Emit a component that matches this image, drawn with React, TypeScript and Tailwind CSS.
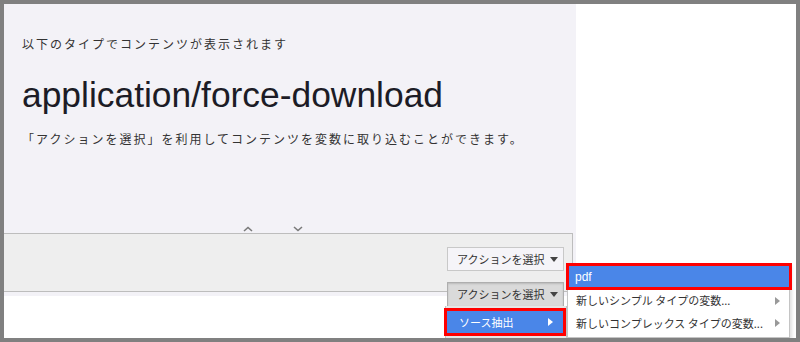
const jp = "font-['Noto_Sans_CJK_JP','Noto_Sans',sans-serif]";

const Caret = ({ color = "border-t-[#444]" }: { color?: string }) => (
  <span className={`inline-block w-0 h-0 border-x-[4px] border-x-transparent border-t-[5px] ${color}`} />
);

const RightArrow = ({ color = "border-l-[#999]" }: { color?: string }) => (
  <span className={`inline-block w-0 h-0 border-y-[4px] border-y-transparent border-l-[5px] ${color}`} />
);

const Chevron = ({ up }: { up?: boolean }) => (
  <svg width="10" height="6" viewBox="0 0 10 6" className="block">
    <polyline
      points={up ? "1,5 5,1.5 9,5" : "1,1 5,4.5 9,1"}
      fill="none"
      stroke="#7a7a7a"
      strokeWidth="1.6"
    />
  </svg>
);

const App = () => {
  return (
    <div className={`relative w-[800px] h-[342px] border-4 border-[#808080] bg-white overflow-hidden ${jp}`}>
      <div className="w-[572px] h-[292px] bg-[#f3f2f7] flex flex-col">
        <div className="h-[229px] shrink-0 pl-[18px] pt-[31px] flex flex-col">
          <p className="text-[12px] leading-[18px] tracking-[2px] text-[#333]">
            以下のタイプでコンテンツが表示されます
          </p>
          <h1 className="mt-[22px] text-[35.4px] leading-[40px] font-['Liberation_Sans',Arial,sans-serif] text-[#1c1c26]">
            application/force-download
          </h1>
          <p className="mt-[15px] text-[12px] leading-[18px] tracking-[2px] text-[#333]">
            「アクションを選択」を利用してコンテンツを変数に取り込むことができます。
          </p>
          <div className="mt-auto flex items-end gap-[40px] ml-[221px] mb-[1px]">
            <Chevron up />
            <Chevron />
          </div>
        </div>
        <div className="w-[569px] h-[59px] shrink-0 bg-[#eeeeee] border-y border-r border-[#bdbdbd] flex justify-end pr-[8px] pt-[13px]">
          <div className="flex flex-col gap-[11px]">
            <button className="shrink-0 w-[117px] h-[24px] flex items-center gap-[6px] pl-[9px] bg-[#f5f4f8] border border-[#c8c8c8] text-[11px] text-[#333]">
              <span>アクションを選択</span>
              <Caret />
            </button>
            <button className="shrink-0 w-[117px] h-[25px] flex items-center gap-[6px] pl-[9px] bg-[#dadada] border border-[#aeaeae] shadow-[inset_0_1px_2px_rgba(0,0,0,0.15)] text-[11px] text-[#333]">
              <span>アクションを選択</span>
              <Caret />
            </button>
          </div>
        </div>
      </div>

      {/* open dropdown */}
      <div className="absolute left-[441px] top-[302px] w-[122px] h-[40px] bg-[#e6e6e6] border-x border-[#c4c4c4]">
        <div className="mt-[2px] -ml-[2px] w-[122px] h-[28px] border-[3px] border-[#ff0000] bg-[#4a86e8] flex items-center justify-between pl-[12px] pr-[10px] text-[11px] text-white">
          <span>ソース抽出</span>
          <RightArrow color="border-l-white" />
        </div>
      </div>

      {/* submenu */}
      <div className="absolute left-[563px] top-[259px] w-[223px] h-[75px] bg-white border border-[#c4c4c4] shadow-[2px_2px_3px_rgba(0,0,0,0.12)] text-[11px] text-[#333]">
        <div className="-ml-[2px] -mt-[1px] w-[226px] h-[27px] border-[3px] border-[#ff0000] bg-[#4a86e8] flex items-center pl-[6px] text-white font-['Liberation_Sans',Arial,sans-serif] text-[12px]">
          pdf
        </div>
        <div className="h-[21px] flex items-center justify-between pl-[8px] pr-[9px]">
          <span>新しいシンプル タイプの変数...</span>
          <RightArrow />
        </div>
        <div className="h-[24px] flex items-center justify-between pl-[8px] pr-[9px]">
          <span>新しいコンプレックス タイプの変数...</span>
          <RightArrow />
        </div>
      </div>
    </div>
  );
};

export default App;
